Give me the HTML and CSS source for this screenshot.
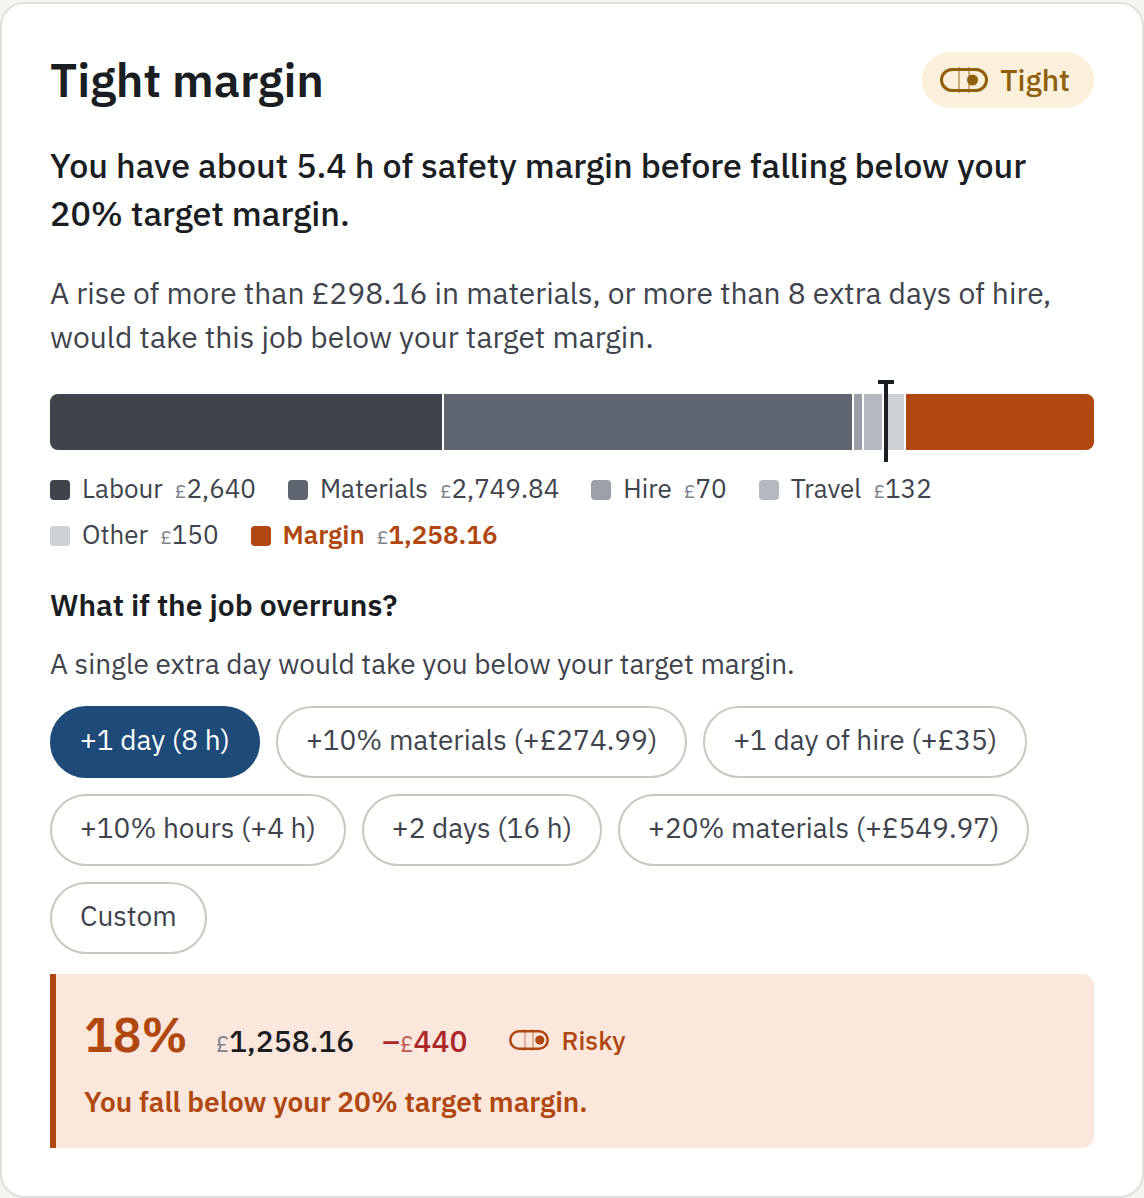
FILE: index.html
```html
<!DOCTYPE html>
<html lang="en">
<head>
	<meta charset="utf-8">
	<meta name="viewport" content="width=device-width, initial-scale=1.0">
	<title>Tight margin</title>
	<link rel="stylesheet" href="styles.css">
</head>
<body>
	<main class="card">
		<header class="card-head">
			<h1>Tight margin</h1>
			<span class="badge">
				<svg width="48" height="28" viewBox="0 0 48 28" fill="none" stroke="currentColor" aria-hidden="true">
					<path d="M19 1V27M29 1V27" stroke-width="2" opacity=".45"/>
					<rect x="1.5" y="3.5" width="45" height="21" rx="10.5" stroke-width="3"/>
					<circle cx="32.5" cy="14" r="5.5" fill="currentColor" stroke="none"/>
				</svg>
				Tight
			</span>
		</header>

		<p class="lead">You have about 5.4 h of safety margin before falling below your 20% target margin.</p>
		<p class="detail">A rise of more than £298.16 in materials, or more than 8 extra days of hire, would take this job below your target margin.</p>

		<div class="bar-wrap">
			<div class="bar">
				<span class="labour" style="width:37.71%"></span>
				<span class="materials" style="width:39.28%"></span>
				<span class="hire" style="width:1%"></span>
				<span class="travel" style="width:1.89%"></span>
				<span class="other" style="width:2.14%"></span>
				<span class="margin" style="width:17.98%"></span>
			</div>
			<i class="target" style="left:80%"></i>
		</div>
		<ul class="legend">
			<li><i class="swatch labour"></i>Labour <span><small>£</small>2,640</span></li>
			<li><i class="swatch materials"></i>Materials <span><small>£</small>2,749.84</span></li>
			<li><i class="swatch hire"></i>Hire <span><small>£</small>70</span></li>
			<li><i class="swatch travel"></i>Travel <span><small>£</small>132</span></li>
			<li><i class="swatch other"></i>Other <span><small>£</small>150</span></li>
			<li class="total"><i class="swatch margin"></i>Margin <span><small>£</small>1,258.16</span></li>
		</ul>

		<h2>What if the job overruns?</h2>
		<p class="note">A single extra day would take you below your target margin.</p>
		<div class="chips">
			<button type="button" class="chip active" aria-pressed="true">+1 day (8 h)</button>
			<button type="button" class="chip">+10% materials (+£274.99)</button>
			<button type="button" class="chip">+1 day of hire (+£35)</button>
			<button type="button" class="chip">+10% hours (+4 h)</button>
			<button type="button" class="chip">+2 days (16 h)</button>
			<button type="button" class="chip">+20% materials (+£549.97)</button>
			<button type="button" class="chip">Custom</button>
		</div>

		<section class="result">
			<div class="figures">
				<strong class="percent">18%</strong>
				<span class="amount"><small>£</small>1,258.16</span>
				<span class="amount loss">–<small>£</small>440</span>
				<span class="status">
					<svg width="40" height="24" viewBox="0 0 40 24" fill="none" stroke="currentColor" aria-hidden="true">
						<path d="M16 1V23M24 1V23" stroke-width="1.5" opacity=".45"/>
						<rect x="1.25" y="3.25" width="37.5" height="17.5" rx="8.75" stroke-width="2.5"/>
						<circle cx="30.8" cy="12" r="4.6" fill="currentColor" stroke="none"/>
					</svg>
					Risky
				</span>
			</div>
			<p class="verdict">You fall below your 20% target margin.</p>
		</section>
	</main>
</body>
</html>
```
FILE: styles.css
```css
* { box-sizing: border-box; }
body {
	margin: 0;
	padding: 2px 0 0;
	background: #f6f5f1;
	color: #1a1e23;
	font-family: "IBM Plex Sans", Roboto, sans-serif;
}
h1, h2, p, ul { margin: 0; padding: 0; }

.card {
	padding: 48px;
	background: #fff;
	border: 2px solid #e0e0db;
	border-radius: 24px;
}
.card-head {
	display: flex;
	justify-content: space-between;
	align-items: center;
}
h1 { font-size: 47px; line-height: 56px; font-weight: 600; }
.badge {
	display: flex;
	align-items: center;
	gap: 12px;
	padding: 0 24px 0 18px;
	border-radius: 28px;
	background: #fbf0db;
	color: #8f5f0a;
	font-size: 30px;
	line-height: 56px;
	font-weight: 500;
}

.lead { margin-top: 33px; font-size: 34px; line-height: 48px; font-weight: 500; }
.detail { margin-top: 34px; font-size: 30px; line-height: 44px; color: #3e434c; }

/* cost bar */
.bar-wrap { position: relative; margin-top: 35px; }
.bar {
	display: flex;
	height: 56px;
	border-radius: 8px;
	overflow: hidden;
}
.bar span { border-right: 2px solid #fff; background-clip: padding-box; }
.bar span:last-child { border-right: 0; }
.labour { background-color: #3e434c; }
.materials { background-color: #5e6470; }
.hire { background-color: #9a9fa8; }
.travel { background-color: #b3b9be; }
.other { background-color: #cdd1d3; }
.margin { background-color: #b0470f; }
.target {
	position: absolute;
	top: -14px;
	bottom: -12px;
	width: 4px;
	margin-left: -1px;
	background: #1a1e23;
}
.target::before {
	content: "";
	position: absolute;
	top: 0;
	left: -6px;
	width: 16px;
	height: 4px;
	background: #1a1e23;
}

.legend {
	display: flex;
	flex-wrap: wrap;
	gap: 10px 32px;
	margin-top: 20px;
	list-style: none;
	font-size: 26px;
	line-height: 36px;
	color: #3e434c;
}
.legend li { display: flex; align-items: center; gap: 12px; }
.swatch { width: 20px; height: 20px; margin-top: 4px; border-radius: 4px; }
.total { color: #b0470f; font-weight: 600; }
small { font-size: 75%; line-height: 1; font-weight: 400; color: #7d828b; }

h2 { margin-top: 33px; font-size: 30px; line-height: 40px; font-weight: 600; }
.note { margin-top: 19px; font-size: 28px; line-height: 40px; color: #3e434c; }

.chips { display: flex; flex-wrap: wrap; gap: 16px; margin-top: 22px; }
.chip {
	height: 72px;
	padding: 0 28px 6px;
	border: 2px solid #c9c8c0;
	border-radius: 36px;
	background: #fff;
	color: #3e434c;
	font-family: inherit;
	font-size: 28px;
	cursor: pointer;
}
.chip.active { border-color: #1e4a79; background: #1e4a79; color: #fff; }

.result {
	margin-top: 20px;
	padding: 28px 28px 26px;
	border-left: 6px solid #b0470f;
	border-radius: 0 12px 12px 0;
	background: #fbe7dc;
	color: #b0470f;
}
.figures { display: flex; align-items: baseline; gap: 28px; }
.percent { font-size: 48px; line-height: 64px; font-weight: 600; }
.amount { font-size: 30px; font-weight: 500; color: #1a1e23; }
.loss { color: #ab2727; }
.loss small { color: inherit; opacity: .75; }
.status {
	display: flex;
	align-items: center;
	gap: 12px;
	margin-left: 14px;
	font-size: 26px;
	font-weight: 500;
}
.verdict { margin-top: 16px; font-size: 28px; line-height: 40px; font-weight: 600; }
```
